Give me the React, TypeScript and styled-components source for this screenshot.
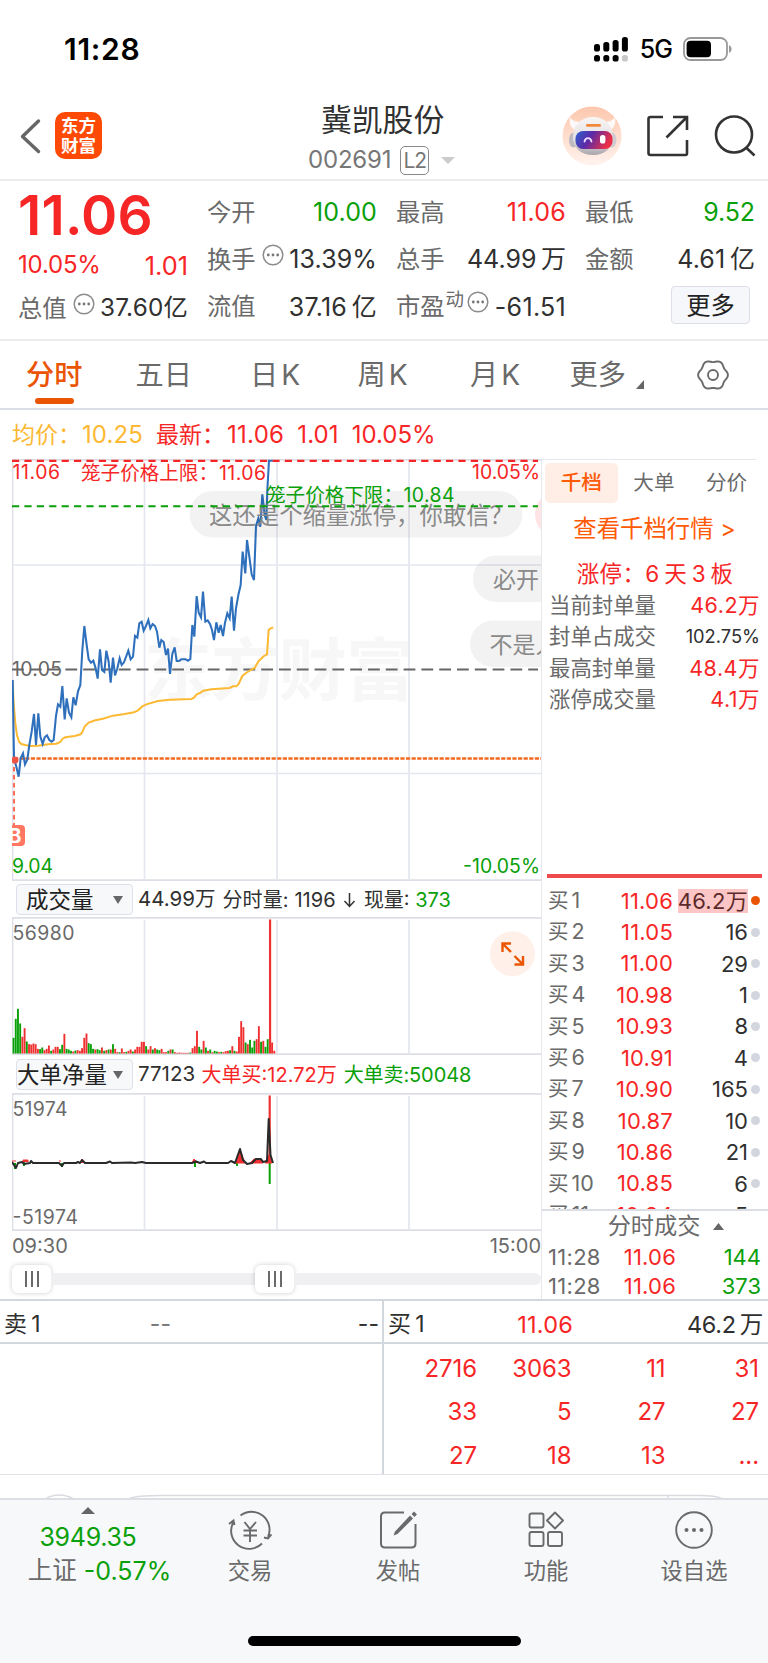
import React from "react";
import styled, { createGlobalStyle } from "styled-components";

const C = {
  red: "#f72626",
  green: "#0aa00a",
  grey: "#6a6a6a",
  dark: "#303030",
  line: "#e6e8ee",
  rule: "#d3d7de",
  orange: "#ea5504",
  amber: "#fdb933",
};
const FONT = 'Inter, "Noto Sans CJK SC", sans-serif';

const GlobalStyle = createGlobalStyle`
  * { box-sizing: border-box; }
  body { margin: 0; background: #fff; }
  svg { display: block; flex: none; }
`;

const Page = styled.div`
  width: 768px;
  height: 1663px;
  overflow: hidden;
  display: flex;
  flex-direction: column;
  background: #fff;
  font-family: ${FONT};
  color: ${C.dark};
  white-space: nowrap;
`;

const T = styled.span<{ $s?: number; $c?: string; $ls?: number; $w?: number; $ml?: number; $mt?: number }>`
  font-size: ${(p) => p.$s ?? 24}px;
  color: ${(p) => p.$c ?? "inherit"};
  letter-spacing: ${(p) => p.$ls ?? 0}px;
  font-weight: ${(p) => p.$w ?? 400};
  margin-left: ${(p) => p.$ml ?? 0}px;
  margin-top: ${(p) => p.$mt ?? 0}px;
  line-height: 1.2;
`;

/* ---------- status bar ---------- */
const StatusBar = styled.div`
  height: 98px;
  padding: 0 36px 0 64px;
  display: flex;
  align-items: center;
  justify-content: space-between;
  color: #000;
`;
const StatusIcons = styled.div`
  display: flex;
  align-items: center;
  gap: 11px;
`;

/* ---------- navigation ---------- */
const Nav = styled.header`
  height: 83px;
  padding: 0 12px 1px 20px;
  border-bottom: 2px solid #ececee;
  display: grid;
  grid-template-columns: 290px 1fr 193px;
  align-items: center;
`;
const NavLeft = styled.div`
  display: flex;
  align-items: center;
  gap: 13px;
  padding-bottom: 5px;
`;
const Logo = styled.div`
  width: 47px;
  height: 47px;
  border-radius: 10px;
  background: #ff4a05;
  color: #fff;
  font-weight: 700;
  font-size: 17.5px;
  line-height: 19.5px;
  text-align: center;
  padding-top: 4px;
`;
const NavTitle = styled.div`
  display: flex;
  flex-direction: column;
  align-items: flex-start;
  padding: 2px 0 0 11px;
`;
const Code = styled.div`
  display: flex;
  align-items: center;
  height: 32px;
  margin: 6px 0 0 -13px;
`;
const Level = styled.span`
  width: 29px;
  height: 29px;
  margin: 0 12px 0 9px;
  border: 1.5px solid #8a8a8a;
  border-radius: 5px;
  font-size: 21px;
  line-height: 27px;
  text-align: center;
  letter-spacing: -1px;
  color: #777;
`;
const NavActions = styled.div`
  display: flex;
  align-items: center;
  justify-content: flex-end;
  padding-bottom: 4px;
`;

/* ---------- quote ---------- */
const Quote = styled.section`
  height: 160px;
  padding: 0 13px 0 19px;
  border-bottom: 2px solid #ececee;
  display: grid;
  grid-template-columns: repeat(4, 169px);
  column-gap: 20px;
`;
const QuoteCol = styled.div`
  display: flex;
  flex-direction: column;
  padding-top: 7.5px;
`;
const Cell = styled.div<{ $h?: number }>`
  height: ${(p) => p.$h ?? 47}px;
  display: flex;
  align-items: center;
  justify-content: space-between;
`;
const Label = styled.span`
  display: flex;
  align-items: center;
  margin: -3px 0 0 -1px;
  color: ${C.grey};
  font-size: 24.3px;
`;
const Sup = styled.span`
  font-size: 18.5px;
  margin: -14px -3px 0 1px;
`;
const MoreButton = styled.button`
  width: 79px;
  height: 38px;
  margin: 3px 5px 0 auto;
  padding: 0;
  border: 1px solid #dcdfe8;
  border-radius: 4px;
  background: #f6f7fa;
  color: #222;
  font: 400 24.3px/34px ${FONT};
`;

/* ---------- period tabs ---------- */
const Tabs = styled.nav`
  height: 69px;
  padding-left: 26px;
  border-bottom: 2px solid #dcdee7;
  display: grid;
  grid-template-columns: 109.5px 114.5px 107.5px 112.5px 99.500px 127.5px 32px;
  align-items: center;
`;
const Tab = styled.div<{ $on?: boolean }>`
  position: relative;
  height: 67px;
  line-height: 69px;
  font-size: 28.2px;
  color: ${(p) => (p.$on ? C.orange : C.grey)};
  font-weight: ${(p) => (p.$on ? 500 : 400)};
  display: flex;
  gap: 3px;
  &::after {
    content: "";
    display: ${(p) => (p.$on ? "block" : "none")};
    position: absolute;
    left: 9px;
    bottom: 4px;
    width: 39px;
    height: 6px;
    border-radius: 3px;
    background: ${C.orange};
  }
`;
const Corner = styled.svg`
  align-self: flex-end;
  margin: 0 0 19px 7px;
`;

const Averages = styled.div`
  height: 49px;
  padding: 2px 0 0 12px;
  display: flex;
  align-items: center;
`;

/* ---------- body ---------- */
const Body = styled.section`
  height: 842px;
  border-bottom: 2px solid ${C.rule};
  display: flex;
`;
const Charts = styled.div`
  width: 542px;
  padding-left: 12px;
  border-right: 1px solid ${C.line};
  display: flex;
  flex-direction: column;
`;
const Picker = styled.div<{ $pad: number }>`
  width: 117px;
  height: 31px;
  margin: 0 5px 0 4px;
  padding: 0 9px 0 ${(p) => p.$pad}px;
  border: 1px solid #dde0e8;
  border-radius: 4px;
  background: #f7f8fa;
  color: #222;
  font-size: 22.5px;
  line-height: 29px;
  display: flex;
  align-items: center;
  justify-content: space-between;
`;
const Indicator = styled.div<{ $h: number }>`
  height: ${(p) => p.$h}px;
  padding-top: 1px;
  display: flex;
  align-items: center;
`;
const TimeAxis = styled.div`
  height: 29px;
  padding-top: 2px;
  display: flex;
  align-items: center;
  justify-content: space-between;
`;
const Slider = styled.div`
  height: 40px;
  display: flex;
  align-items: center;
`;
const Track = styled.div<{ $w: number }>`
  width: ${(p) => p.$w}px;
  height: 12px;
  background: #f0f0f3;
  &:last-child { border-radius: 0 6px 6px 0; }
`;
const Thumb = styled.div`
  width: 39px;
  height: 28px;
  border-radius: 6px;
  background: #fff;
  box-shadow: 0 0 5px rgba(0, 0, 0, 0.2);
  display: flex;
  align-items: center;
  justify-content: center;
  gap: 4px;
  & > i {
    width: 2px;
    height: 16px;
    background: #6a6a6a;
  }
`;

const Side = styled.aside`
  width: 226px;
  display: flex;
  flex-direction: column;
`;
const SideTabs = styled.div`
  height: 44px;
  margin-right: 12px;
  padding: 3px 0 0 3px;
  border-top: 1px solid ${C.line};
  display: flex;
`;
const SideTab = styled.div<{ $on?: boolean }>`
  flex: 0 0 72.6px;
  height: 40px;
  border-radius: 5px;
  background: ${(p) => (p.$on ? "#ffeee5" : "transparent")};
  color: ${(p) => (p.$on ? "#ff5a05" : C.grey)};
  font-weight: ${(p) => (p.$on ? 500 : 400)};
  font-size: 20.6px;
  line-height: 39px;
  text-align: center;
`;
const Centered = styled.div<{ $h: number; $pl?: number }>`
  height: ${(p) => p.$h}px;
  padding-left: ${(p) => p.$pl ?? 0}px;
  display: flex;
  flex: none;
  align-items: center;
  justify-content: center;
  gap: 13px;
`;
const Stats = styled.div`
  height: 126px;
  margin-top: -2px;
`;
const Stat = styled.div`
  height: 31.5px;
  padding: 0 8px 0 7px;
  display: flex;
  align-items: center;
  justify-content: space-between;
`;
const RedBar = styled.div`
  flex: none;
  height: 4px;
  margin: 158px 6px 7px 5px;
  background: #ef4b4f;
`;
const Depth = styled.div`
  flex: none;
  height: 326px;
  border-bottom: 2px solid #dcdee5;
  overflow: hidden;
`;
const DepthRow = styled.div`
  height: 31.45px;
  padding: 0 8px 0 6px;
  display: grid;
  grid-template-columns: 50px 75px 75px 12px;
  align-items: center;
  font-size: 22px;
  & > :nth-child(2), & > :nth-child(3) { text-align: right; }
`;
const Qty = styled.span<{ $hot?: boolean }>`
  justify-self: end;
  line-height: 24px;
  letter-spacing: ${(p) => (p.$hot ? 0.3 : 0)}px;
  background: ${(p) => (p.$hot ? "#fcc6c6" : "transparent")};
  color: ${(p) => (p.$hot ? "#5c2a2a" : C.dark)};
`;
const Dot = styled.i<{ $on?: boolean }>`
  width: 9px;
  height: 9px;
  margin-left: 3px;
  border-radius: 50%;
  background: ${(p) => (p.$on ? C.orange : "#d3d6de")};
`;
const TickRow = styled.div`
  flex: none;
  height: 29.5px;
  padding: 0 7px 0 6px;
  display: grid;
  grid-template-columns: 64px 64px 1fr;
  align-items: center;
  & > :nth-child(n + 2) { text-align: right; }
`;

/* ---------- order queue ---------- */
const Queue = styled.section`
  height: 174px;
  border-bottom: 1.5px solid #e1e3e8;
  display: grid;
  grid-template-columns: 382px 386px;
  grid-template-rows: 43px 129.5px;
`;
const QueueHead = styled.div<{ $cols: string; $left?: boolean }>`
  border-bottom: 2px solid ${C.rule};
  border-left: ${(p) => (p.$left ? `2px solid ${C.rule}` : "none")};
  padding: 7px ${(p) => (p.$left ? 5 : 3)}px 0 5px;
  display: grid;
  grid-template-columns: ${(p) => p.$cols};
  align-items: center;
  & > :nth-child(n + 2) { text-align: right; }
`;
const QueueGrid = styled.div`
  grid-column: 2;
  height: 129.5px;
  border-left: 2px solid ${C.rule};
  padding: 3px 9px 0 0;
  display: grid;
  grid-template-columns: 93px 94.5px 94px 1fr;
  grid-auto-rows: 43.8px;
  align-items: center;
  text-align: right;
`;
const Peek = styled.div`
  height: 23px;
`;

/* ---------- bottom bar ---------- */
const Bottom = styled.footer`
  flex: 1;
  border-top: 2px solid #dcdee3;
  background: #f7f8fa;
  display: flex;
  flex-direction: column;
  align-items: center;
`;
const BottomRow = styled.div`
  height: 136px;
  width: 768px;
  display: grid;
  grid-template-columns: 176px 148px 148px 148px 148px;
`;
const IndexBox = styled.div`
  display: flex;
  flex-direction: column;
  align-items: center;
  padding-top: 7px;
`;
const IndexLine = styled.div`
  display: flex;
  align-items: center;
  margin-top: 4px;
  padding-left: 23px;
  gap: 7px;
`;
const BottomItem = styled.div`
  display: flex;
  flex-direction: column;
  align-items: center;
  padding-top: 9px;
  gap: 7px;
  color: ${C.grey};
`;
const HomeBar = styled.div`
  width: 273px;
  height: 10px;
  border-radius: 5px;
  background: #000;
`;

/* ---------- icons ---------- */
const Tri = ({ w, h, up, c = "#666" }: { w: number; h: number; up?: boolean; c?: string }) => (
  <svg width={w} height={h} viewBox="0 0 10 10" preserveAspectRatio="none">
    <path d={up ? "M5 0L10 10H0z" : "M0 0H10L5 10z"} fill={c} />
  </svg>
);

const InfoSvg = styled.svg`
  margin: -6px 0 0 6px;
`;
const Info = () => (
  <InfoSvg width="22" height="22" viewBox="0 0 22 22">
    <circle cx="11" cy="11" r="9.8" fill="none" stroke="#8c8c8c" strokeWidth="1.5" />
    <g fill="#777">
      <circle cx="6.3" cy="11" r="1.4" />
      <circle cx="11" cy="11" r="1.4" />
      <circle cx="15.7" cy="11" r="1.4" />
    </g>
  </InfoSvg>
);

const Signal = () => (
  <svg width="35" height="25" viewBox="0 0 35 25">
    {[7, 5, 3, 0].map((y, i) => (
      <rect key={i} x={i * 9.3} y={y} width="6" height={14.5 - y} rx="2.6" />
    ))}
    {[0, 1, 2, 3].map((i) => (
      <rect key={i} x={i * 9.3} y="18" width="6" height="6.5" rx="2.6" fill={i === 3 ? "#c8c8c8" : "#000"} />
    ))}
  </svg>
);

const Battery = () => (
  <svg width="49" height="24" viewBox="0 0 49 24">
    <rect x="1" y="1" width="43" height="22" rx="6.5" fill="none" stroke="#999" strokeWidth="1.8" />
    <rect x="3.6" y="3.8" width="24.4" height="16.4" rx="4" />
    <path d="M46 8.2c3.4 1.2 3.4 6.4 0 7.6z" fill="#999" />
  </svg>
);

const Robot = () => (
  <svg width="60" height="60" viewBox="0 0 60 60">
    <defs>
      <linearGradient id="halo" x1="0" y1="0" x2="0" y2="1">
        <stop offset="0" stopColor="#fdc7ad" />
        <stop offset="1" stopColor="#fff3ee" />
      </linearGradient>
      <linearGradient id="visor" x1="0" y1="0" x2="1" y2="0.3">
        <stop offset="0" stopColor="#2f62d0" />
        <stop offset="0.45" stopColor="#5a2aa8" />
        <stop offset="1" stopColor="#ea3048" />
      </linearGradient>
      <linearGradient id="shell" x1="0" y1="0" x2="0" y2="1">
        <stop offset="0" stopColor="#f8f5f5" />
        <stop offset="0.6" stopColor="#e4e0e3" />
        <stop offset="1" stopColor="#a9a5ac" />
      </linearGradient>
    </defs>
    <circle cx="30" cy="30" r="29.5" fill="url(#halo)" />
    <path d="M8 11c-1 7 1 11 5 13l7-8c-6 0-10-1-12-5zM53 11c1 7-1 11-5 13l-7-8c6 0 10-1 12-5z" fill="#fdf9f8" />
    <ellipse cx="11.500" cy="34" rx="4.500" ry="7.500" fill="#bdb9c0" />
    <ellipse cx="50" cy="34" rx="4.500" ry="7.500" fill="#d0ccd1" />
    <path d="M31 11c12 0 19.500 8 19.500 20 0 11-7.500 18-19.500 18s-20-7-20-18c0-12 8-20 20-20z" fill="url(#shell)" />
    <rect x="13.500" y="25" width="37" height="18" rx="7.500" fill="url(#visor)" />
    <rect x="24" y="18" width="15" height="2.800" rx="1.300" fill="#f0893c" />
    <path d="M22.500 35.500c1-4.500 6-4.500 7 0" fill="none" stroke="#e9dcff" strokeWidth="1.800" strokeLinecap="round" />
    <rect x="38" y="29" width="5.400" height="8.500" rx="2.600" fill="#fff" />
  </svg>
);

const GEAR = Array.from({ length: 72 }, (_, i) => {
  const a = (i * Math.PI) / 36;
  const r = 13.9 + 1 * Math.cos(6 * a);
  return `${(16 + r * Math.cos(a)).toFixed(2)},${(16 + r * Math.sin(a)).toFixed(2)}`;
}).join(" ");
const Gear = () => (
  <svg width="32" height="32" viewBox="0 0 32 32" fill="none" stroke="#6a6a6a" strokeWidth="1.9" strokeLinejoin="round">
    <polygon points={GEAR} />
    <circle cx="16" cy="16" r="5" />
  </svg>
);

const DownSvg = styled.svg`
  margin: 0 8px 0 7px;
`;
const Down = () => (
  <DownSvg width="13" height="16" viewBox="0 0 13 16" fill="none" stroke="#333" strokeWidth="1.5">
    <path d="M6.500 1V14M1.500 9L6.500 14.500L11.500 9" />
  </DownSvg>
);

const ShareSvg = styled.svg`
  margin: 0 25px;
`;

/* ---------- chart data (one unit = 1/3 px) ---------- */
const PRICE =
  "14,270 18,505 25,530 32,560 38,505 45,490 51,523 58,508 64,465 71,425 78,372 84,465 91,370 97,440 104,462 110,442 117,436 124,450 131,455 137,450 144,378 150,343 157,350 163,288 170,388 176,325 183,368 190,382 196,322 203,346 210,304 217,285 223,180 229,108 236,165 242,208 249,218 256,212 263,235 269,266 276,178 282,240 289,246 295,182 302,215 308,278 315,203 321,256 328,235 335,205 341,225 348,217 361,182 368,208 375,200 381,138 388,143 394,100 401,95 407,122 414,108 421,90 427,115 434,102 441,108 447,125 454,173 460,150 467,156 474,195 480,176 486,252 493,192 500,172 506,213 513,213 520,208 533,208 540,212 547,207 553,105 559,140 566,18 572,68 579,82 585,5 592,95 599,91 606,102 612,120 618,150 625,97 632,128 638,105 645,138 651,98 658,70 665,85 671,20 678,122 684,55 691,15 698,-15 704,-115 712,-50 717,-150 724,-100 731,-47 738,-30 744,-192 751,-215 757,-190 763,-287 770,-225 775,-210 778,-300 783,-388 794,-388";
const AVERAGE =
  "14,275 17,340 22,400 27,435 33,455 40,462 52,465 66,468 90,467 120,463 145,461 157,456 164,446 172,442 200,438 218,433 224,424 230,410 242,398 262,391 285,386 315,377 350,372 378,367 390,361 402,350 415,343 450,333 485,329 550,327 558,323 566,313 578,308 586,302 610,298 665,294 675,289 685,289 692,282 703,258 714,249 728,240 740,234 752,213 768,198 777,193 782,120 788,115 796,112";

const VOLUME = [
  -47, -104, -134, -90, 50, 76, -36, 28, 27, 30, 28, 14, -13, -18, 10, 14, 24, -8, 12, 20, 20, -13, -26, 59, -14, -12, -8, 6, -9, 10,
  8, 16, 47, 60, -31, -28, -14, 12, -13, -10, 18, -8, 10, -12, 12, -28, 14, 4, -4, 15, 4, -5, 8, 12, -6, 12, 20, 20, 35, 35,
  -22, 12, 22, -12, 16, -12, -10, 14, 4, 4, -8, 12, -12, 4, 2, 3, 2, 2, 2, 2, -3, 16, 22, 68, -20, -12, 38, -18, 8, -12,
  4, -8, -6, 4, -5, 4, 7, 8, -10, 22, -8, 6, 50, 97, 79, -33, 28, -41, -18, -38, 43, 82, -35, 38, -20, -43, 402, 33, 8,
];

const Grid = ({ h }: { h: number }) => (
  <g stroke="#e4e7ef" strokeWidth="1.7" fill="none">
    <path d={`M132.500 3V${h - 2}M265 3V${h - 2}M397 3V${h - 2}`} />
    <path d={`M0 0.800H530M0.500 0V${h}M0 ${h - 0.8}H530`} stroke="#dddfe7" />
  </g>
);

const P = ({
  x, y, s = 19.4, w, c, end, children,
}: { x: number; y: number; s?: number; w: number; c: string; end?: boolean; children: string }) => (
  <text
    x={end ? x - w : x}
    y={y}
    fontSize={s}
    fontFamily={FONT}
    fill={c}
    textLength={w}
    lengthAdjust="spacing"
  >
    {children}
  </text>
);

const Bubble = ({ x, y, w, c = "rgba(0,0,0,0.05)" }: { x: number; y: number; w: number; c?: string }) => (
  <rect x={x} y={y} width={w} height="46.500" rx="23.200" fill={c} />
);

const PriceChart = () => (
  <svg width="529" height="422" viewBox="0 0 529 422">
    <g fontFamily={FONT} fontSize="68" fontWeight="700" fill="#f7f7f7">
      <text x="132" y="236" textLength="270">东方财富</text>
    </g>
    <Grid h={422} />
    <path d="M0 106H529M0 314.500H529" stroke="#e4e7ef" strokeWidth="1.700" />
    <path d="M0 1.900H526" stroke={C.red} strokeWidth="2.200" strokeDasharray="7.200 5.200" />
    <path d="M0 210.500H526" stroke="#666" strokeWidth="2" strokeDasharray="11.800 6" />
    <path d="M2 299.500H529" stroke="#f26a21" strokeWidth="2.500" strokeDasharray="4.200 1.400" />
    <g transform="translate(-4 131) scale(0.33333)" fill="none" strokeLinejoin="miter">
      <polyline points={AVERAGE} stroke={C.amber} strokeWidth="6" />
      <polyline points={PRICE} stroke="#2f70bd" strokeWidth="6.200" />
    </g>
    <path d="M2 300V368" stroke="#ff6a55" strokeWidth="2" strokeDasharray="4.500 3.500" />
    <circle cx="3" cy="301" r="3.500" fill="#ee5544" />
    <path d="M0 366H9a4 4 0 0 1 4 4V383a4 4 0 0 1-4 4H0z" fill="#ff7763" />
    <text x="-3.500" y="383.500" fontSize="19.500" fontWeight="700" fontFamily={FONT} fill="#fff">B</text>
    <Bubble x={177.5} y={32} w={333} />
    <Bubble x={523} y={32} w={60} c="#ffe4e6" />
    <Bubble x={461} y={96.5} w={120} />
    <Bubble x={458} y={161.5} w={120} />
    <P x={197} y={64.5} s={23.4} w={304} c="#8a8a8a">这还是个缩量涨停，你敢信？</P>
    <P x={481} y={128.5} s={23} w={46} c="#8a8a8a">必开</P>
    <P x={477.5} y={193.5} s={23} w={69} c="#8a8a8a">不是人</P>
    <path d="M0 47.300H526" stroke={C.green} strokeWidth="2" strokeDasharray="7.200 5.200" />
    <P x={0.5} y={20} w={47.5} c={C.red}>11.06</P>
    <P x={69} y={21.2} w={137} s={19.6} c={C.red}>笼子价格上限：</P>
    <P x={207} y={21.2} w={47} c={C.red}>11.06</P>
    <P x={254} y={42.8} w={137} s={19.6} c={C.green}>笼子价格下限：</P>
    <P x={391.5} y={42.8} w={51} c={C.green}>10.84</P>
    <P x={528} y={20} w={68} c={C.red} end>10.05%</P>
    <P x={0} y={217} w={50} c="#666">10.05</P>
    <P x={0} y={414} w={41} c={C.green}>9.04</P>
    <P x={528} y={414} w={77} c={C.green} end>-10.05%</P>
  </svg>
);

const VolumeChart = () => (
  <svg width="529" height="138" viewBox="0 0 529 138">
    <Grid h={138} />
    {VOLUME.map((v, i) => (
      <rect
        key={i}
        x={0.6 + i * 2.21}
        y={136.5 - Math.abs(v) / 3}
        width={i === 116 ? 2.2 : 1.9}
        height={Math.abs(v) / 3}
        fill={v > 0 ? "#f03030" : C.green}
      />
    ))}
    <P x={0.5} y={22.5} w={62} c="#6a6a6a">56980</P>
    <circle cx="500.500" cy="36.700" r="22.500" fill="#fff1ea" />
    <path
      d="M490.500 35V26.500H499M491 27L499 35M502.500 47.500H511V39M510.500 47L502.500 39"
      fill="none" stroke={C.orange} strokeWidth="2.400"
    />
  </svg>
);

const NetChart = () => (
  <svg width="529" height="138" viewBox="0 0 529 138">
    <Grid h={138} />
    <path d="M3 70v6M12 68v5M50 70v4M183 70v4M225 70v3M257.700 70V91" stroke={C.green} strokeWidth="2" />
    <path d="M257.700 2.500V70" stroke="#f03030" strokeWidth="2.200" />
    <path d="M0 68h4M11 69v-2h5v2M48 69v-2M68 70l2-4 3 4M180 70l2-4 4 4M224 70l4-13 5 13zM238 70l4-4h7l2 4zM253 70l4-8 3 8z" fill="#f03030" stroke="#f03030" />
    <polyline
      points="0,69 4,75 6,70 10,69 12,71 18,70 19,68 21,70 47,70 50,73 52,70 64,70 66,69 68,70 70,67 73,70 94,70 98,68.500 100,70 119,69.500 123,70 130,69 134,70 180,70 184,68.500 188,70 192,68.500 194,70 216,70 219,68 223,70 228,56 231,67 235,71 240,70 244,66 249,66 251,69 255,68 256.700,26 258.500,62 261,70"
      fill="none" stroke="#2a2a2a" strokeWidth="2" strokeLinejoin="round"
    />
    <P x={0.5} y={22.5} w={55} c="#6a6a6a">51974</P>
    <P x={0.5} y={131} w={65.5} c="#6a6a6a">-51974</P>
  </svg>
);

/* ---------- content ---------- */
const DEPTH = [
  ["1", "11.06", "46.2万"], ["2", "11.05", "16"], ["3", "11.00", "29"], ["4", "10.98", "1"],
  ["5", "10.93", "8"], ["6", "10.91", "4"], ["7", "10.90", "165"], ["8", "10.87", "10"],
  ["9", "10.86", "21"], ["10", "10.85", "6"], ["11", "10.84", "5"],
];
const STATS = [
  ["当前封单量", "46.2万"], ["封单占成交", "102.75%"], ["最高封单量", "48.4万"], ["涨停成交量", "4.1万"],
];
const QUEUE = ["2716", "3063", "11", "31", "33", "5", "27", "27", "27", "18", "13", "..."];

export default function App() {
  return (
    <Page>
      <GlobalStyle />
      <StatusBar>
        <T $s={30} $w={600} $ls={0.7}>11:28</T>
        <StatusIcons>
          <Signal />
          <T $s={25} $w={500} $ls={-1}>5G</T>
          <Battery />
        </StatusIcons>
      </StatusBar>

      <Nav>
        <NavLeft>
          <svg width="22" height="36" viewBox="0 0 22 36" fill="none" stroke="#666" strokeWidth="3.400" strokeLinecap="round" strokeLinejoin="round">
            <path d="M18.500 3L2.500 18.500L18.500 33.500" />
          </svg>
          <Logo>东方<br />财富</Logo>
        </NavLeft>
        <NavTitle>
          <T $s={30.8}>冀凯股份</T>
          <Code>
            <T $s={24} $c="#777" $ls={-0.2}>002691</T>
            <Level>L2</Level>
            <Tri w={14} h={7} c="#ccc" />
          </Code>
        </NavTitle>
        <NavActions>
          <Robot />
          <ShareSvg width="42" height="42" viewBox="0 0 42 42" fill="none" stroke="#333" strokeWidth="2.600">
            <path d="M16 2H3.500Q1.500 2 1.500 4V38Q1.500 40 3.500 40H38.500Q40 40 40 38V25M26 2H40V15M40 2L19.500 22.500" />
          </ShareSvg>
          <svg width="42" height="42" viewBox="0 0 42 42" fill="none" stroke="#333" strokeWidth="2.600">
            <circle cx="20" cy="19.500" r="18" />
            <path d="M32 32.500L40.500 40.500" />
          </svg>
        </NavActions>
      </Nav>

      <Quote>
        <QuoteCol>
          <Cell $h={52}><T $s={55} $c={C.red} $w={600} $ls={0.2} $ml={-1}>11.06</T></Cell>
          <Cell $h={46}>
            <T $s={24} $c={C.red} $ls={-0.2} $ml={-1} $mt={4}>10.05%</T>
            <T $s={25.3} $c={C.red} $mt={6}>1.01</T>
          </Cell>
          <Cell $h={43}>
            <Label>总值<Info /></Label>
            <T $s={24.3} $ls={0.2}>37.60亿</T>
          </Cell>
        </QuoteCol>
        <QuoteCol>
          <Cell><Label>今开</Label><T $s={25} $c={C.green} $ls={0.1}>10.00</T></Cell>
          <Cell><Label>换手<Info /></Label><T $s={25} $ls={0.1}>13.39%</T></Cell>
          <Cell><Label>流值</Label><T $s={25} $ls={0.2} $mt={1}>37.16{"\u2009"}亿</T></Cell>
        </QuoteCol>
        <QuoteCol>
          <Cell><Label>最高</Label><T $s={25} $c={C.red} $ls={0.2}>11.06</T></Cell>
          <Cell><Label>总手</Label><T $s={25}>44.99{"\u2009"}万</T></Cell>
          <Cell>
            <Label>市盈<Sup>动</Sup><Info /></Label>
            <T $s={25} $ls={0.3} $mt={1}>-61.51</T>
          </Cell>
        </QuoteCol>
        <QuoteCol>
          <Cell><Label>最低</Label><T $s={25} $c={C.green} $ls={-0.1}>9.52</T></Cell>
          <Cell><Label>金额</Label><T $s={25} $ls={0.1}>4.61{"\u2009"}亿</T></Cell>
          <MoreButton>更多</MoreButton>
        </QuoteCol>
      </Quote>

      <Tabs>
        <Tab $on>分时</Tab>
        <Tab>五日</Tab>
        <Tab>日<span>K</span></Tab>
        <Tab>周<span>K</span></Tab>
        <Tab>月<span>K</span></Tab>
        <Tab>
          更多
          <Corner width="8" height="9" viewBox="0 0 8 9">
            <path d="M8 0V9H0z" fill="#666" />
          </Corner>
        </Tab>
        <Gear />
      </Tabs>

      <Averages>
        <T $s={23} $c={C.amber}>均价：</T>
        <T $s={24} $c={C.amber} $ls={0.1} $ml={1}>10.25</T>
        <T $s={23} $c={C.red} $ml={13}>最新：</T>
        <T $s={24} $c={C.red} $ls={0.3} $ml={2}>11.06</T>
        <T $s={24} $c={C.red} $ls={0.1} $ml={13}>1.01</T>
        <T $s={24} $c={C.red} $ml={13}>10.05%</T>
      </Averages>

      <Body>
        <Charts>
          <PriceChart />
          <Indicator $h={37}>
            <Picker $pad={9}>成交量<Tri w={10} h={8} /></Picker>
            <T $s={20.5}>44.99万</T>
            <T $s={20} $ls={0.1} $ml={7}>分时量: 1196</T>
            <Down />
            <T $s={20}>现量: <T as="span" $s={20} $c={C.green}>373</T></T>
          </Indicator>
          <VolumeChart />
          <Indicator $h={38}>
            <Picker $pad={0}>大单净量<Tri w={10} h={8} /></Picker>
            <T $s={20.5}>77123</T>
            <T $s={20} $c={C.red} $ml={6.5}>大单买:12.72万</T>
            <T $s={20} $c={C.green} $ls={-0.1} $ml={7}>大单卖:50048</T>
          </Indicator>
          <NetChart />
          <TimeAxis>
            <T $s={20} $c="#6a6a6a">09:30</T>
            <T $s={20} $c="#6a6a6a">15:00</T>
          </TimeAxis>
          <Slider>
            <Thumb><i /><i /><i /></Thumb>
            <Track $w={204} />
            <Thumb><i /><i /><i /></Thumb>
            <Track $w={247} />
          </Slider>
        </Charts>

        <Side>
          <SideTabs>
            <SideTab $on>千档</SideTab>
            <SideTab>大单</SideTab>
            <SideTab>分价</SideTab>
          </SideTabs>
          <Centered $h={52}><T $s={23.4} $c="#ff5a05" $ml={-1}>查看千档行情 &gt;</T></Centered>
          <Centered $h={37}><T $s={22.5} $c={C.red} $ls={0.4}>涨停：6{"\u2009"}天{"\u2009"}3{"\u2009"}板</T></Centered>
          <Stats>
            {STATS.map(([k, v], i) => (
              <Stat key={k}>
                <T $s={21.4} $c={C.grey}>{k}</T>
                <T $s={i === 1 ? 18.3 : 21.5} $c={i === 1 ? C.dark : C.red} $ls={i === 1 ? 0 : 0.5}>{v}</T>
              </Stat>
            ))}
          </Stats>
          <RedBar />
          <Depth>
            {DEPTH.map(([n, p, q], i) => (
              <DepthRow key={n}>
                <T $s={20.5} $c={C.grey}>买<T $s={21.5} $ml={3}>{n}</T></T>
                <T $s={22} $c={C.red} $ls={0.2}>{p}</T>
                <Qty $hot={i === 0}>{q}</Qty>
                <Dot $on={i === 0} />
              </DepthRow>
            ))}
          </Depth>
          <Centered $h={31} $pl={22}>
            <T $s={23.2} $c={C.grey}>分时成交</T>
            <Tri w={11} h={7} up />
          </Centered>
          {["144", "373"].map((v) => (
            <TickRow key={v}>
              <T $s={22} $c={C.grey} $ls={0.3}>11:28</T>
              <T $s={22} $c={C.red} $ls={0.2}>11.06</T>
              <T $s={22} $c={C.green}>{v}</T>
            </TickRow>
          ))}
        </Side>
      </Body>

      <Queue>
        <QueueHead $cols="60px 106px 1fr">
          <T $s={23} $ml={-1}>卖{"\u2009"}1</T>
          <T $s={23} $c="#777">--</T>
          <T $s={23}>--</T>
        </QueueHead>
        <QueueHead $left $cols="60px 124px 1fr">
          <T $s={23} $ml={-1}>买{"\u2009"}1</T>
          <T $s={23.5} $c={C.red} $ls={0.2}>11.06</T>
          <T $s={23.5} $ls={-0.3}>46.2{"\u2009"}万</T>
        </QueueHead>
        <QueueGrid>
          {QUEUE.map((q, i) => (
            <T key={i} $s={24} $c={C.red} $ls={-0.1}>{q}</T>
          ))}
        </QueueGrid>
      </Queue>
      <Peek>
        <svg width="768" height="23" viewBox="0 0 768 23" fill="none" stroke="#d9dbe0" strokeWidth="1.400">
          <path d="M45 24Q59 16 74 24M128 24Q136 20.500 160 20.500H700Q716 20.500 723 24M668 20.500V24" />
        </svg>
      </Peek>

      <Bottom>
        <BottomRow>
          <IndexBox>
            <Tri w={14} h={7} up />
            <T $s={25} $c={C.green} $ls={-0.3} $mt={8}>3949.35</T>
            <IndexLine>
              <T $s={24.5} $c={C.grey}>上证</T>
              <T $s={25} $c={C.green} $ls={0}>-0.57%</T>
            </IndexLine>
          </IndexBox>
          <BottomItem>
            <svg width="44" height="42" viewBox="0 0 44 42" fill="none" stroke="#6a6a6a" strokeWidth="1.900">
              <path d="M12.500 6.500A18 18 0 0 1 40 28M43.500 25.500L40 29.500L36 28.500M34 34.500A18 18 0 0 1 5.500 13M1 15L5.500 11.500L6.500 16" />
              <path d="M16.500 13L22 20L28 13M22 20V33M15.500 21.500H29M15.500 26.500H29" />
            </svg>
            <T $s={22.3}>交易</T>
          </BottomItem>
          <BottomItem>
            <svg width="42" height="42" viewBox="0 0 42 42" fill="none" stroke="#6a6a6a" strokeWidth="2">
              <path d="M27 3.500H8Q4 3.500 4 7.500V34.500Q4 38.500 8 38.500H34.500Q38.500 38.500 38.500 34.500V15" />
              <path d="M16.500 26.500L18 22.500L33 6.500L36 9.500L20.500 25z" fill="#6a6a6a" stroke="none" />
              <path d="M36 6.500L38.500 4" strokeWidth="4" />
            </svg>
            <T $s={22.3}>发帖</T>
          </BottomItem>
          <BottomItem>
            <svg width="42" height="42" viewBox="0 0 42 42" fill="none" stroke="#6a6a6a" strokeWidth="1.900" strokeLinejoin="round">
              <rect x="4.500" y="4.500" width="14" height="14" rx="2" />
              <rect x="4.500" y="23" width="14" height="14" rx="2" />
              <rect x="23" y="23" width="14" height="14" rx="2" />
              <path d="M30 3.500L38 11.500L30 19.500L22 11.500z" />
            </svg>
            <T $s={22.3}>功能</T>
          </BottomItem>
          <BottomItem>
            <svg width="42" height="42" viewBox="0 0 42 42" fill="#6a6a6a">
              <circle cx="21" cy="21" r="17.800" fill="none" stroke="#6a6a6a" strokeWidth="1.900" />
              <circle cx="13.500" cy="21" r="2" />
              <circle cx="21" cy="21" r="2" />
              <circle cx="28.500" cy="21" r="2" />
            </svg>
            <T $s={22.3}>设自选</T>
          </BottomItem>
        </BottomRow>
        <HomeBar />
      </Bottom>
    </Page>
  );
}
